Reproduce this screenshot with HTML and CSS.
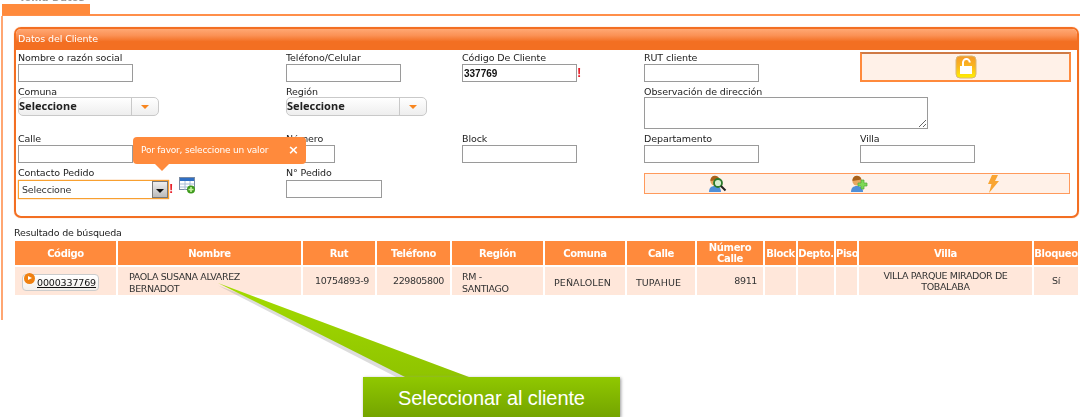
FILE: index.html
```html
<!DOCTYPE html>
<html lang="es">
<head>
<meta charset="utf-8">
<title>Datos del Cliente</title>
<link rel="stylesheet" href="styles.css">
</head>
<body>
<div class="app">
  <nav class="tabs"><div class="tab"><span class="tab-label">Toma Datos</span></div></nav>
  <div class="content">
    <section class="panel">
      <h2 class="panel-title">Datos del Cliente</h2>
      <div class="form">
        <div class="row row-1">
          <div class="field f1"><label>Nombre o razón social</label><input class="in w115" type="text"></div>
          <div class="field f2"><label>Teléfono/Celular</label><input class="in w115" type="text"></div>
          <div class="field f3"><label>Código De Cliente</label><div class="inline"><input class="in w115 strong" type="text" value="337769"><span class="req">!</span></div></div>
          <div class="field f4"><label>RUT cliente</label><input class="in w115" type="text"></div>
          <div class="lock-box">
            <svg width="22" height="24" viewBox="0 0 22 24"><defs><linearGradient id="lk" x1="0" y1="0" x2="0" y2="1"><stop offset="0" stop-color="#f59a2a"/><stop offset=".5" stop-color="#fbb81c"/><stop offset="1" stop-color="#fff200"/></linearGradient></defs><rect x="1" y="1" width="20" height="22" rx="4" fill="url(#lk)" stroke="#d9b878"/><path d="M8 11V7.500a3.400 3.400 0 0 1 6.800 0" fill="none" stroke="#fff" stroke-width="2"/><rect x="5" y="11" width="12" height="8" fill="#fff"/></svg>
          </div>
        </div>
        <div class="row row-2">
          <div class="field f1"><label>Comuna</label><div class="combo"><span class="combo-val">Seleccione</span><span class="combo-btn"><i class="caret"></i></span></div></div>
          <div class="field f2"><label>Región</label><div class="combo"><span class="combo-val">Seleccione</span><span class="combo-btn"><i class="caret"></i></span></div></div>
          <div class="field f3"></div>
          <div class="field f4 wide"><label>Observación de dirección</label><textarea class="ta"></textarea></div>
        </div>
        <div class="row row-3">
          <div class="field f1"><label>Calle</label><input class="in w115" type="text"></div>
          <div class="field f2"><label>Número</label><input class="in w49" type="text"></div>
          <div class="field f3"><label>Block</label><input class="in w115" type="text"></div>
          <div class="field f4"><label>Departamento</label><input class="in w115" type="text"></div>
          <div class="field"><label>Villa</label><input class="in w115" type="text"></div>
        </div>
        <div class="row row-4">
          <div class="field f1"><label>Contacto Pedido</label>
            <div class="inline">
              <div class="dd"><span class="dd-val">Seleccione</span><span class="dd-btn"><i class="dd-caret"></i></span></div>
              <span class="req">!</span>
              <svg class="tbl-ic" width="17" height="17" viewBox="0 0 17 17"><rect x=".5" y=".5" width="15" height="12" fill="#fff" stroke="#7a8ba3"/><rect x="1" y="1" width="14" height="3" fill="#2f6fc4"/><path d="M1 7h14M1 10h14M6 4v9M11 4v9" stroke="#a9bcd6"/><circle cx="12" cy="12.500" r="4" fill="#3d9a1c"/><path d="M12 10v5M9.500 12.500h5" stroke="#c7f0a0" stroke-width="1.600"/></svg>
            </div>
          </div>
          <div class="field f2"><label>N° Pedido</label><input class="in w96" type="text"></div>
          <div class="field f3"></div>
          <div class="actions">
            <svg width="19" height="18" viewBox="0 0 19 18"><path d="M1 17c0-4 2-6 6-6s6 2 6 6z" fill="#4f8fd8"/><circle cx="7" cy="6" r="4.600" fill="#e8a860"/><path d="M2.500 6a4.500 4.500 0 0 1 9-1.500z" fill="#a9621b"/><circle cx="10" cy="8" r="4" fill="#d9f0d0" stroke="#2d7a2d" stroke-width="1.800"/><path d="M13 11l4.500 4.500" stroke="#222" stroke-width="2"/></svg>
            <svg width="19" height="18" viewBox="0 0 19 18"><path d="M1 17c0-4 2-6 6-6s6 2 6 6z" fill="#4f8fd8"/><circle cx="7" cy="6" r="4.600" fill="#e8a860"/><path d="M2.500 6a4.500 4.500 0 0 1 9-1.500z" fill="#a9621b"/><path d="M11 5h3v3h3v3h-3v3h-3v-3H8V8h3z" fill="#7ed957" stroke="#4fa83a" stroke-width=".7"/></svg>
            <svg width="14" height="18" viewBox="0 0 14 18"><path d="M6 0h6L9 6h4L3 18l2.500-9H2z" fill="#f9a533"/></svg>
          </div>
        </div>
      </div>
    </section>
    <p class="res-title">Resultado de búsqueda</p>
    <table class="grid">
      <colgroup><col class="c1"><col class="c2"><col class="c3"><col class="c4"><col class="c5"><col class="c6"><col class="c7"><col class="c8"><col class="c9"><col class="c10"><col class="c11"><col class="c12"><col class="c13"></colgroup>
      <thead><tr><th>Código</th><th>Nombre</th><th>Rut</th><th>Teléfono</th><th>Región</th><th>Comuna</th><th>Calle</th><th>Número Calle</th><th>Block</th><th>Depto.</th><th>Piso</th><th>Villa</th><th>Bloqueo</th></tr></thead>
      <tbody><tr>
        <td class="code-cell"><a class="code-btn"><span class="play"></span>0000337769</a></td>
        <td class="pad-name">PAOLA SUSANA ALVAREZ BERNADOT</td>
        <td class="num">10754893-9</td>
        <td class="num">229805800</td>
        <td class="pad-reg">RM - SANTIAGO</td>
        <td class="ctr low">PEÑALOLEN</td>
        <td class="ctr low">TUPAHUE</td>
        <td class="num">8911</td>
        <td></td><td></td><td></td>
        <td class="ctr">VILLA PARQUE MIRADOR DE TOBALABA</td>
        <td class="ctr">Sí</td>
      </tr></tbody>
    </table>
  </div>
</div>
<div class="tooltip"><span>Por favor, seleccione un valor</span><b class="tip-x">×</b></div>
<svg class="pointer" width="270" height="100" viewBox="0 0 270 100"><defs><linearGradient id="pt" x1="0" y1="0" x2="0" y2="1"><stop offset="0" stop-color="#a4dc00"/><stop offset="1" stop-color="#8fc400"/></linearGradient></defs><polygon points="0,0 183,94 248,94" fill="#9a9a9a" opacity=".35" transform="translate(-1,2)"/><polygon points="0,0 187,94 251,94" fill="url(#pt)"/></svg>
<div class="callout">Seleccionar al cliente</div>
</body>
</html>
```
FILE: styles.css
```css
* { box-sizing: border-box; }
html, body { margin: 0; height: 417px; overflow: hidden; background: #fff; }
body { position: relative; font-family: "DejaVu Sans", sans-serif; font-size: 9.5px; color: #222; }
.app { height: 320px; padding-left: 1px; filter: blur(.3px); }
.tabs { height: 16px; padding-top: 4px; margin-left: 1px; background: linear-gradient(#ff8f4a, #ff8f4a) 0 100% / 100% 2px no-repeat; }
.tab { width: 88px; height: 11px; background: #ff8a3c; position: relative; }
.tab-label { position: absolute; left: 17px; top: -13px; font-size: 10px; font-weight: 700; color: #999; line-height: 14px; white-space: nowrap; }
.content { height: 304px; border-left: 2px solid #ffa672; padding: 11px 0 0 11px; width: 1079px; }
.panel { width: 1065px; height: 191px; border: 2px solid #f36f22; border-radius: 7px; overflow: hidden; box-shadow: 0 0 1px #ff9a5c; }
.panel-title { margin: 0; height: 21px; padding-left: 2px; font-size: 9.5px; letter-spacing: -.01em; line-height: 19px; font-weight: 400; color: #fff; background: linear-gradient(#ffa873 0, #fb9256 30%, #f36f22 60%, #f36f22 100%); }
.form { padding-left: 2px; }
.row { display: flex; }
.row-1 { height: 33px; margin-top: 1px; }
.row-2 { height: 48px; }
.row-3 { height: 34px; }
.row-4 { height: 40px; }
.field { display: flex; flex-direction: column; }
.f1 { width: 268px; }
.f2 { width: 176px; }
.f3 { width: 182px; }
.f4 { width: 216px; }
.wide { width: 400px; }
label { display: block; height: 13px; line-height: 13px; letter-spacing: -.01em; color: #222; }
.row-2 label { line-height: 15px; }
.in { display: block; height: 18px; border: 1px solid #9a9a9a; background: #fff; padding: 0 1px; font: 9.5px "DejaVu Sans", sans-serif; color: #111; }
.w115 { width: 115px; }
.w49 { width: 49px; }
.w96 { width: 96px; }
.strong { font: 700 10px "Liberation Sans", sans-serif; }
.inline { display: flex; align-items: flex-start; }
.req { color: #e8202a; font: 700 13px/18px "Liberation Sans", sans-serif; width: 4px; text-align: center; }
.lock-box { width: 211px; height: 30px; margin-top: 1px; background: #fff1e8; border: 2px solid #ff8a3c; border-top-color: #cf7a45; display: flex; align-items: center; justify-content: center; }
.combo { width: 141px; height: 19px; border: 1px solid #c9c9c9; border-radius: 5px; background: linear-gradient(#fff, #eee); display: flex; align-items: center; }
.combo-val { flex: 1; padding-bottom: 2px; font: 700 11px "Noto Sans", sans-serif; color: #222; }
.combo-btn { width: 27px; height: 100%; border-left: 1px solid #c9c9c9; display: flex; align-items: center; justify-content: center; }
.caret { width: 0; height: 0; border: 4px solid transparent; border-top: 4px solid #f8861f; border-bottom: 0; }
.ta { display: block; width: 284px; height: 32px; border: 1px solid #9a9a9a; padding: 0; background: #fff; }
.row-4 .field label { height: 14px; line-height: 14px; }
.dd { width: 151px; height: 19px; border: 1px solid #f8a030; box-shadow: 0 0 1px #f8861f; display: flex; background: #fff; }
.dd-val { flex: 1; padding-left: 3px; letter-spacing: -.02em; line-height: 17px; color: #333; }
.dd-btn { width: 16px; background: linear-gradient(#eee, #bbb); border: 1px solid #777; display: flex; align-items: center; justify-content: center; }
.dd-caret { width: 0; height: 0; border: 4px solid transparent; border-top: 4px solid #111; border-bottom: 0; margin-top: 2px; }
.tbl-ic { margin: -3px 0 0 6px; }
.actions { width: 426px; height: 21px; margin-top: 7px; background: #fff1e8; border: 1px solid #ff9a5c; display: flex; align-items: center; }
.actions svg:nth-child(1) { margin-left: 63px; }
.actions svg:nth-child(2) { margin-left: 123px; }
.actions svg:nth-child(3) { margin-left: 117px; }
.res-title { margin: 8px 0 0; height: 14px; line-height: 14px; letter-spacing: -.02em; color: #222; }
.grid { table-layout: fixed; width: 1067px; margin: -1px 0 0 -1px; border-collapse: separate; border-spacing: 2px; }
.c1 { width: 101px; } .c2 { width: 183px; } .c3 { width: 72px; } .c4 { width: 73px; } .c5 { width: 91px; } .c6 { width: 80px; } .c7 { width: 68px; } .c8 { width: 66px; } .c9 { width: 31px; } .c10 { width: 36px; } .c11 { width: 21px; } .c12 { width: 173px; } .c13 { width: 44px; }
.grid th { height: 24px; padding: 0; background: #ff8a3c; color: #fff; font-size: 10px; line-height: 11px; font-weight: 700; letter-spacing: -.035em; }
.grid td { height: 28px; padding: 0; background: #ffe7da; line-height: 11.500px; color: #333; letter-spacing: -.04em; }
.grid td.ctr { text-align: center; padding: 0 8px; }
.grid td.low { padding: 4px 13px 0 8px; letter-spacing: .01em; }
.grid td.pad-name { padding: 3px 40px 0 11px; }
.grid td.pad-reg { padding: 3px 30px 0 10px; }
.grid td.num { text-align: right; padding-right: 6px; }
.grid td.code-cell { padding: 3px 0 0 7px; }
.code-btn { display: inline-flex; align-items: center; height: 17px; padding: 0 2px 0 14px; position: relative; background: linear-gradient(#fff, #f4f0ec); border: 1px solid #ccc; border-radius: 4px; color: #111; text-decoration: underline; letter-spacing: -.015em; }
.play { position: absolute; left: 1px; top: -2px; width: 11px; height: 11px; border-radius: 50%; background: #f08010; }
.play::after { content: ""; position: absolute; left: 4px; top: 3px; border-left: 4px solid #fff; border-top: 2.500px solid transparent; border-bottom: 2.500px solid transparent; }
.tooltip { position: absolute; left: 133px; top: 137px; width: 173px; height: 27px; padding-left: 8px; background: #ff8a3c; border-radius: 4px; color: #fff; font-size: 9px; letter-spacing: -.2px; line-height: 27px; filter: blur(.25px); }
.tooltip::after { content: ""; position: absolute; left: 22px; top: 27px; border-left: 7px solid transparent; border-right: 7px solid transparent; border-top: 7px solid #ff8a3c; }
.tip-x { position: absolute; left: 155px; top: -1px; font-size: 13px; }
.pointer { position: absolute; left: 218px; top: 283px; }
.callout { position: absolute; left: 363px; top: 377px; width: 257px; height: 40px; background: linear-gradient(#90c800, #74a400); box-shadow: 1px 1px 3px #999; color: #fff; font: 20px/42px "Liberation Sans", sans-serif; letter-spacing: -.1px; text-align: center; }
```
